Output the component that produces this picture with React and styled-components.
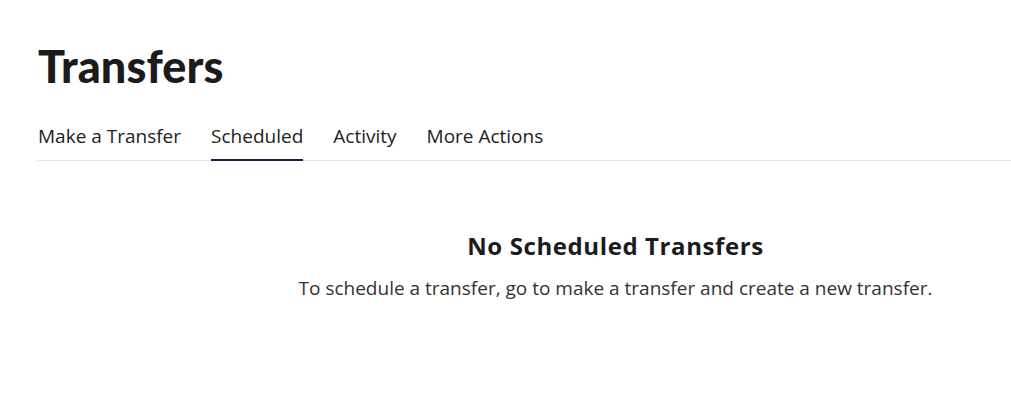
import React from "react";
import styled, { createGlobalStyle } from "styled-components";

const Global = createGlobalStyle`
  html, body { margin: 0; padding: 0; background: #fff; }
  body { font-family: "Open Sans", "Noto Sans", sans-serif; color: #1f1f1f; }
`;

const Page = styled.div`
  padding: 39px 0 0 38px;
`;

const Title = styled.h1`
  margin: 0;
  font-family: Lato, "Open Sans", sans-serif;
  font-weight: 900;
  font-size: 45px;
  line-height: 54px;
  color: #1b1b1b;
  letter-spacing: 0.1px;
`;

const TabBar = styled.nav`
  display: flex;
  gap: 30px;
  margin-top: 31px;
  border-bottom: 1px solid #e6e6e6;
  margin-left: -1px;
  padding-left: 1px;
`;

const Tab = styled.button`
  border: 0;
  background: none;
  padding: 0 0 11px;
  font-family: "Open Sans", sans-serif;
  font-size: 19px;
  line-height: 24px;
  color: #222;
  cursor: pointer;
  border-bottom: 2px solid ${(p) => (p.$active ? "#1c1f45" : "transparent")};
  margin-bottom: -1px;
`;

const Empty = styled.section`
  display: flex;
  flex-direction: column;
  align-items: center;
  margin-left: 182px;
  padding-top: 69px;
`;

const EmptyTitle = styled.h2`
  margin: 0;
  font-family: "Open Sans", sans-serif;
  font-weight: 700;
  font-size: 24px;
  line-height: 32px;
  letter-spacing: 0.6px;
  color: #1b1b1b;
`;

const EmptyText = styled.p`
  margin: 13px 0 0;
  font-family: "Open Sans", sans-serif;
  font-weight: 400;
  font-size: 19px;
  line-height: 26px;
  color: #333;
`;

export default function App() {
  const tabs = ["Make a Transfer", "Scheduled", "Activity", "More Actions"];
  return (
    <>
      <Global />
      <Page>
        <Title>Transfers</Title>
        <TabBar>
          {tabs.map((t) => (
            <Tab key={t} $active={t === "Scheduled"}>
              {t}
            </Tab>
          ))}
        </TabBar>
        <Empty>
          <EmptyTitle>No Scheduled Transfers</EmptyTitle>
          <EmptyText>
            To schedule a transfer, go to make a transfer and create a new transfer.
          </EmptyText>
        </Empty>
      </Page>
    </>
  );
}
